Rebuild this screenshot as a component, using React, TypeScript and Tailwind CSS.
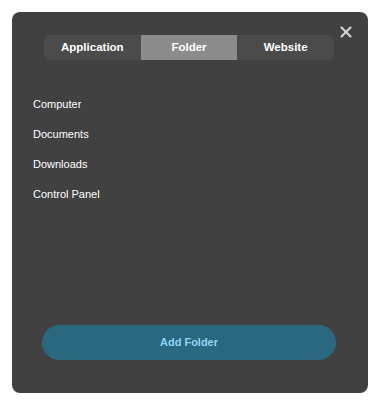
import { X } from 'lucide-react';

const tabs = ['Application', 'Folder', 'Website'];
const folders = ['Computer', 'Documents', 'Downloads', 'Control Panel'];

export default function App() {
  const active = 'Folder';

  return (
    <div className="w-[380px] h-[405px] bg-white p-3 pb-3" style={{ fontFamily: 'Tahoma, "Liberation Sans", "DejaVu Sans", sans-serif' }}>
      <div className="relative h-[381px] rounded-lg bg-[#414141] flex flex-col">
        <button className="absolute right-[13px] top-[11px] text-[#d2d2d2]">
          <X size={18} strokeWidth={3} />
        </button>

        <div className="mt-[23px] mx-[32px] w-[290px] h-[25px] rounded-md bg-[#4b4b4b] grid grid-cols-3 overflow-hidden">
          {tabs.map((tab) => (
            <div
              key={tab}
              className={`flex items-center justify-center text-[11.5px] font-bold text-white ${
                tab === active ? 'bg-[#8c8c8c]' : ''
              }`}
            >
              {tab}
            </div>
          ))}
        </div>

        <div className="mt-[37px] ml-[21px] flex flex-col gap-[16px]">
          {folders.map((f) => (
            <div key={f} className="text-[11px] leading-[14px] text-white">
              {f}
            </div>
          ))}
        </div>

        <div className="mt-auto mb-[33px] mx-[30px]">
          <button className="w-[294px] h-[35px] rounded-full bg-[#2a6880] text-[11px] font-bold text-[#8fd4f4]">
            Add Folder
          </button>
        </div>
      </div>
    </div>
  );
}
